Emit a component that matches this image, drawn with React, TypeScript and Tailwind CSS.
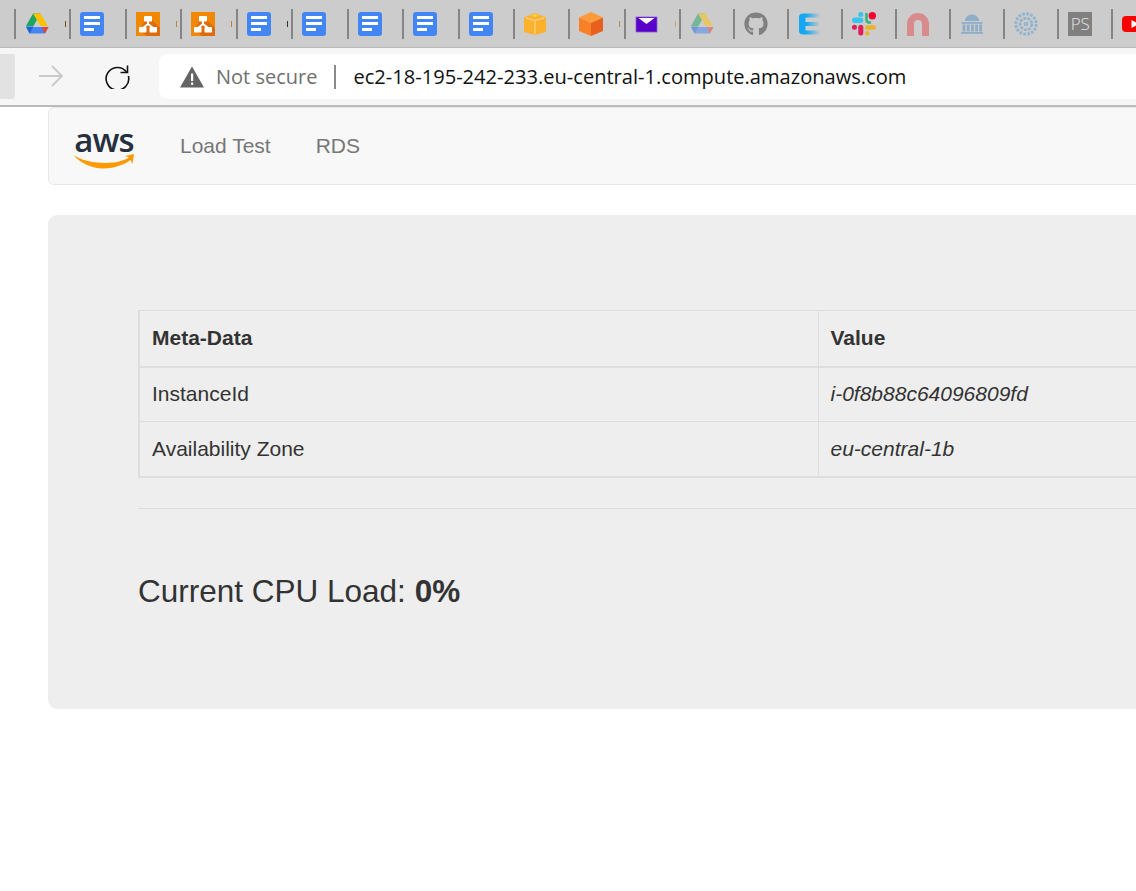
import { FaGithub } from "react-icons/fa";

function DriveIcon({ faded }: { faded?: boolean }) {
    return (
        <svg width="24" height="24" viewBox="0 0 24 24" className={faded ? "opacity-50" : ""}>
            <path d="M8 1.500h7.500L8.500 14H1z" fill="#1fa463" />
            <path d="M15.500 1.500L23 14h-7.500L8 1.500z" fill="#ffc107" />
            <path d="M5 15h18.500l-3.600 6.500H4.600L1 15z" fill="#4285f4" />
            <path d="M16.500 15h7l-3.600 6.500z" fill="#ea4335" />
            <path d="M1 14.500l3.600 7 3.900-7z" fill="#1967d2" />
        </svg>
    );
}

function DocIcon() {
    return (
        <div className="w-6 h-6 rounded-[3px] bg-[#4285f4] flex flex-col justify-center gap-[3px] pl-[4px]">
            <div className="w-4 h-[3px] bg-white" />
            <div className="w-4 h-[3px] bg-white" />
            <div className="w-[10px] h-[3px] bg-white" />
        </div>
    );
}

function DrawIoIcon() {
    return (
        <svg width="24" height="24" viewBox="0 0 24 24">
            <rect width="24" height="24" fill="#f08705" />
            <path d="M24 24H11L4 18l4-8 4-6 12 12z" fill="#df6c0c" />
            <path d="M12 9v3M12 12l-5 4M12 12l5 4" stroke="#fff" strokeWidth="2" fill="none" />
            <rect x="8" y="4" width="8" height="5.500" rx="0.700" fill="#fff" />
            <rect x="3" y="15" width="7.500" height="5.500" rx="0.700" fill="#fff" />
            <rect x="13.500" y="15" width="7.500" height="5.500" rx="0.700" fill="#fff" />
        </svg>
    );
}

function YellowCubeIcon() {
    return (
        <svg width="24" height="24" viewBox="0 0 24 24">
            <path d="M11 1l11 4.500V20l-11 3-11-3V5.500z" fill="#fbb12c" />
            <path d="M2 6l9 2.500L20 6M11 8.500V22" stroke="#f4d07a" strokeWidth="1.500" fill="none" />
            <path d="M7 3.500l4-1.500 4 1.500-4 1.500z" fill="#fdd23e" />
        </svg>
    );
}

function OrangeBoxIcon() {
    return (
        <svg width="24" height="24" viewBox="0 0 24 24">
            <path d="M12 0l12 5.500L12 11 0 5.500z" fill="#ff9a3c" />
            <path d="M0 5.500L12 11v13L0 19z" fill="#f98026" />
            <path d="M24 5.500L12 11v13l12-5z" fill="#e8601c" />
        </svg>
    );
}

function MailIcon() {
    return (
        <svg width="24" height="24" viewBox="0 0 24 24">
            <rect x="1" y="5" width="21" height="15" fill="#5a00c8" stroke="#8a5ad8" strokeWidth="0.800" />
            <path d="M3.500 6h16L11.500 12z" fill="#fff" />
        </svg>
    );
}

function EIcon() {
    return (
        <svg width="24" height="24" viewBox="0 0 24 24">
            <defs>
                <linearGradient id="eFade" x1="0" x2="1" y1="0" y2="0">
                    <stop offset="0.350" stopColor="#12a9f2" />
                    <stop offset="1" stopColor="#12a9f2" stopOpacity="0.050" />
                </linearGradient>
            </defs>
            <path d="M5 1.500h17v4H7.500v4.500H21v4H7.500V18.500H22v4H5a4 4 0 0 1-4-4V5.500a4 4 0 0 1 4-4z" fill="url(#eFade)" />
        </svg>
    );
}

function SlackIcon() {
    return (
        <svg width="24" height="24" viewBox="0 0 24 24">
            <rect x="0" y="5.500" width="11.300" height="5.500" rx="2.700" fill="#36c5f0" />
            <circle cx="8.800" cy="2.500" r="2.500" fill="#36c5f0" />
            <circle cx="20.300" cy="3.700" r="3.700" fill="#f5002f" />
            <path d="M14.500 1v7a2.500 2.500 0 0 0 2.500 2.500h2" stroke="#2eb67d" strokeWidth="2.500" fill="none" />
            <rect x="13" y="13.300" width="11" height="4.500" rx="2.200" fill="#ecb22e" />
            <circle cx="15.300" cy="21.300" r="2.300" fill="#ecb22e" />
            <circle cx="2.400" cy="15.300" r="2.500" fill="#e01e5a" />
            <rect x="6.300" y="12.700" width="5" height="10.800" rx="2.500" fill="#e01e5a" />
        </svg>
    );
}

function MagnetIcon() {
    return (
        <svg width="24" height="24" viewBox="0 0 24 24">
            <path d="M4.500 24V12a7.500 7.500 0 0 1 15 0v12" fill="none" stroke="#d98a8c" strokeWidth="7" />
        </svg>
    );
}

function BankIcon() {
    return (
        <svg width="24" height="24" viewBox="0 0 24 24" fill="#8fadc9">
            <path d="M5 9a7 6.500 0 0 1 14 0z" />
            <rect x="1.500" y="10" width="21" height="1.800" />
            <rect x="2.500" y="12.500" width="2.800" height="7" />
            <rect x="6.800" y="12.500" width="2.800" height="7" />
            <rect x="11" y="12.500" width="2.800" height="7" />
            <rect x="15.200" y="12.500" width="2.800" height="7" />
            <rect x="19.200" y="12.500" width="2.800" height="7" />
            <rect x="1" y="20" width="22" height="1.800" />
        </svg>
    );
}

function GearDotsIcon() {
    return (
        <svg width="24" height="24" viewBox="0 0 24 24" fill="none" stroke="#8fb3cf">
            <circle cx="12" cy="12" r="10.200" strokeWidth="3" strokeDasharray="2.600 1.400" />
            <circle cx="12" cy="12" r="5.800" strokeWidth="2.600" strokeDasharray="3 1" />
            <circle cx="12" cy="12" r="1.500" strokeWidth="1.500" />
        </svg>
    );
}

function PsIcon() {
    return (
        <div className="w-6 h-6 bg-[#808080] text-[#e4e4e4] text-[17px] leading-6 text-center font-['Open_Sans',sans-serif] font-light">
            PS
        </div>
    );
}

function YoutubeIcon() {
    return (
        <svg width="24" height="24" viewBox="0 0 24 24">
            <rect x="0" y="4" width="24" height="16" rx="4" fill="#ff0000" />
            <path d="M9.500 8v8l7-4z" fill="#fff" />
        </svg>
    );
}

const tabs = [
    { icon: <DriveIcon />, mark: "bg-[#7a4a10]", width: "w-[55.45px]" },
    { icon: <DocIcon />, width: "w-[55.45px]" },
    { icon: <DrawIoIcon />, mark: "bg-[#b98a4a]", width: "w-[55.45px]" },
    { icon: <DrawIoIcon />, mark: "bg-[#b9862f]", width: "w-[55.45px]" },
    { icon: <DocIcon />, mark: "bg-[#333333]", width: "w-[55.45px]" },
    { icon: <DocIcon />, width: "w-[55.45px]" },
    { icon: <DocIcon />, width: "w-[55.45px]" },
    { icon: <DocIcon />, width: "w-[55.45px]" },
    { icon: <DocIcon />, width: "w-[55.45px]" },
    { icon: <YellowCubeIcon />, width: "w-[55.45px]" },
    { icon: <OrangeBoxIcon />, mark: "bg-[#b98a4a]", width: "w-[55.45px]" },
    { icon: <MailIcon />, mark: "bg-[#c9a868]", width: "w-[55.45px]" },
    { icon: <DriveIcon faded />, width: "w-[54px]" },
    { icon: <FaGithub size={24} color="#808080" />, width: "w-[54px]" },
    { icon: <EIcon />, width: "w-[54px]" },
    { icon: <SlackIcon />, width: "w-[54px]" },
    { icon: <MagnetIcon />, width: "w-[54px]" },
    { icon: <BankIcon />, width: "w-[54px]" },
    { icon: <GearDotsIcon />, width: "w-[54px]" },
    { icon: <PsIcon />, width: "w-[54px]" },
    { icon: <YoutubeIcon />, width: "w-[54px]" },
];

function TabStrip() {
    return (
        <div className="h-12 bg-[#cccccc] border-b border-[#b8b8b8] flex items-center pl-[14px] shrink-0">
            {tabs.map((tab, i) => (
                <div key={i} className={`${tab.width} h-[30px] shrink-0 border-l-2 border-[#858585] flex items-center pl-[9px]`}>
                    {tab.icon}
                    {tab.mark && <div className={`w-px h-[6px] ml-[16px] ${tab.mark}`} />}
                </div>
            ))}
        </div>
    );
}

function AddressBar() {
    return (
        <div className="h-[59px] bg-[#f6f6f6] border-b-2 border-[#bbbbbb] flex items-start pt-[6px] shrink-0">
            <div className="w-[15px] h-[45px] bg-[#e2e2e2] rounded-r-[3px] shrink-0" />
            <svg width="26" height="24" viewBox="0 0 26 24" className="ml-[23px] mt-[10px] shrink-0" fill="none" stroke="#c8c8c8" strokeWidth="1.800">
                <path d="M1 12h23M14 2l10 10-10 10" />
            </svg>
            <svg width="26" height="26" viewBox="0 0 26 26" className="ml-[40px] mt-[9px] shrink-0" fill="none" stroke="#111111" strokeWidth="1.600">
                <path d="M22.500 9A11.300 11.300 0 1 0 24.400 13" />
                <path d="M23.500 2.500v7h-7" />
            </svg>
            <div className="ml-[29px] flex-1 h-[45px] bg-white rounded-l-[9px] flex items-center pl-[21px] font-['Open_Sans',sans-serif]">
                <svg width="24" height="22" viewBox="0 0 24 22" className="shrink-0">
                    <path d="M12 0.500L24 21.500H0z" fill="#646464" />
                    <rect x="11" y="7.500" width="2.200" height="7.500" fill="#fff" />
                    <rect x="11" y="16.500" width="2.200" height="2.400" fill="#fff" />
                </svg>
                <span className="ml-[12px] text-[20px] text-[#6f6f6f] whitespace-nowrap">Not secure</span>
                <div className="ml-[17px] w-[2px] h-[24px] bg-[#8a8a8a]" />
                <span className="ml-[17px] mt-[1px] text-[20.08px] text-[#111111] whitespace-nowrap">ec2-18-195-242-233.eu-central-1.compute.amazonaws.com</span>
            </div>
        </div>
    );
}

function Navbar() {
    return (
        <div className="h-[78px] bg-[#f8f8f8] border border-[#e7e7e7] rounded-[6px] flex items-center">
            <div className="ml-[24px] w-[62px] flex flex-col items-center">
                <span className="text-[33px] leading-[34px] h-[34px] font-['Open_Sans',sans-serif] font-semibold text-[#252f3e] tracking-[-0.8px]">aws</span>
                <svg width="62" height="16" viewBox="0 0 62 16" fill="#ff9900" className="-mt-[4px]">
                    <path d="M0.500 2C10 9 28 11 41 9.500 C47 8.500 52 7 56 4.500 L52 3 L61 1 L59.500 11 L57.500 7 C50 12.500 40 15.500 30 15.500 C19 15.500 7 10 0.500 2z" />
                </svg>
            </div>
            <span className="ml-[45px] text-[21px] text-[#777777]">Load Test</span>
            <span className="ml-[45px] text-[21px] text-[#777777]">RDS</span>
        </div>
    );
}

function MetaTable() {
    return (
        <table className="w-full table-fixed border-collapse text-[21px] text-[#333333] border-l-2 border-b-2 border-t border-[#dddddd]">
            <colgroup>
                <col className="w-[679px]" />
                <col />
            </colgroup>
            <thead>
                <tr className="h-[56px] border-b-2 border-[#dddddd]">
                    <th className="text-left font-bold pl-3 pb-[2px] border-r border-[#dddddd]">Meta-Data</th>
                    <th className="text-left font-bold pl-3 pb-[2px]">Value</th>
                </tr>
            </thead>
            <tbody>
                <tr className="h-[55px] border-b border-[#dddddd]">
                    <td className="pl-3 pb-[2px] border-r border-[#dddddd]">InstanceId</td>
                    <td className="pl-3 pb-[2px] italic">i-0f8b88c64096809fd</td>
                </tr>
                <tr className="h-[55px]">
                    <td className="pl-3 border-r border-[#dddddd]">Availability Zone</td>
                    <td className="pl-3 italic">eu-central-1b</td>
                </tr>
            </tbody>
        </table>
    );
}

export default function App() {
    return (
        <div className="w-[1136px] h-[891px] overflow-hidden bg-white flex flex-col font-['Liberation_Sans',Arial,sans-serif]">
            <TabStrip />
            <AddressBar />
            <div className="w-[1400px] pl-12 flex flex-col">
                <Navbar />
                <div className="mt-[30px] h-[494px] bg-[#eeeeee] rounded-[9px] pt-[95px] pl-[90px] pr-[91px]">
                    <MetaTable />
                    <hr className="mt-[30px] border-t border-[#dddddd]" />
                    <p className="mt-[62px] text-[31.5px] leading-[40px] text-[#333333]">
                        Current CPU Load: <strong>0%</strong>
                    </p>
                </div>
            </div>
        </div>
    );
}
